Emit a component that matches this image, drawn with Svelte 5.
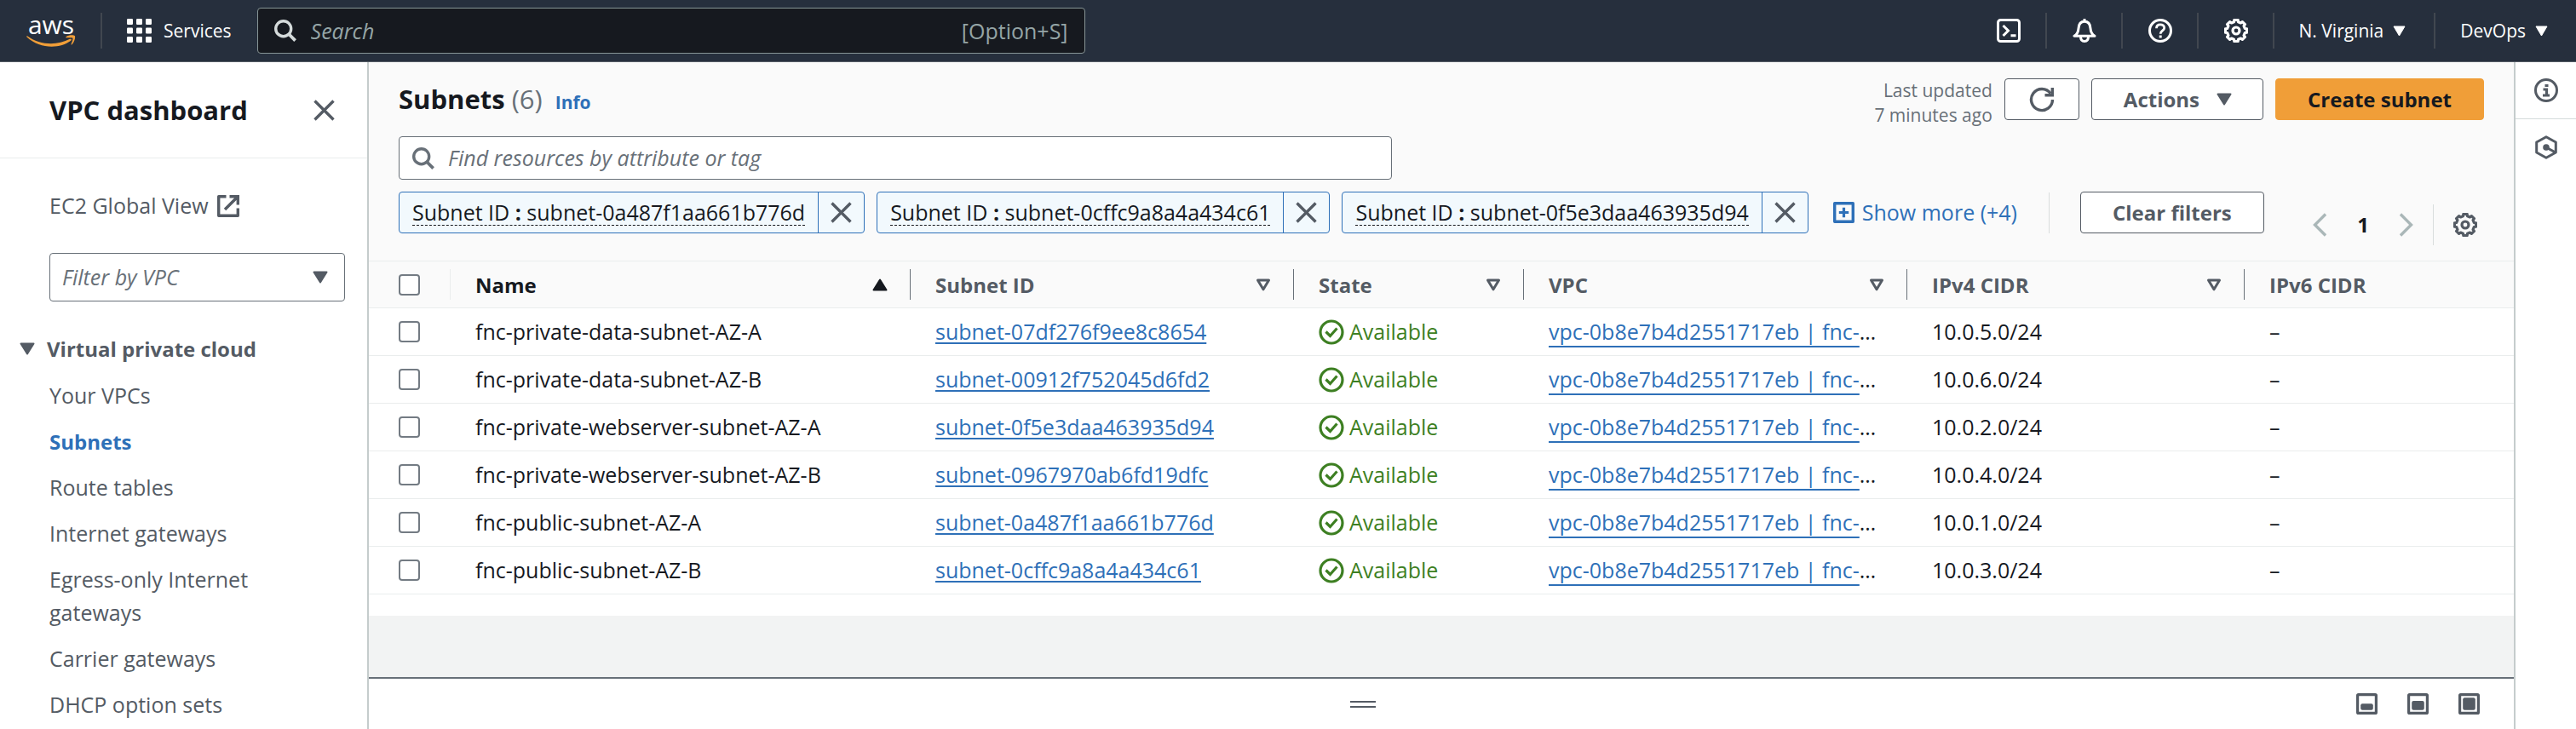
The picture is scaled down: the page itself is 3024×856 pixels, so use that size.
<script>
  const columns = [
    { label: 'Name', sorted: true },
    { label: 'Subnet ID' },
    { label: 'State' },
    { label: 'VPC' },
    { label: 'IPv4 CIDR' },
    { label: 'IPv6 CIDR', last: true },
  ];

  const rows = [
    { name: 'fnc-private-data-subnet-AZ-A', id: 'subnet-07df276f9ee8c8654', cidr: '10.0.5.0/24' },
    { name: 'fnc-private-data-subnet-AZ-B', id: 'subnet-00912f752045d6fd2', cidr: '10.0.6.0/24' },
    { name: 'fnc-private-webserver-subnet-AZ-A', id: 'subnet-0f5e3daa463935d94', cidr: '10.0.2.0/24' },
    { name: 'fnc-private-webserver-subnet-AZ-B', id: 'subnet-0967970ab6fd19dfc', cidr: '10.0.4.0/24' },
    { name: 'fnc-public-subnet-AZ-A', id: 'subnet-0a487f1aa661b776d', cidr: '10.0.1.0/24' },
    { name: 'fnc-public-subnet-AZ-B', id: 'subnet-0cffc9a8a4a434c61', cidr: '10.0.3.0/24' },
  ];

  const tokens = [
    'subnet-0a487f1aa661b776d',
    'subnet-0cffc9a8a4a434c61',
    'subnet-0f5e3daa463935d94',
  ];

  const links = [
    'Your VPCs',
    'Subnets',
    'Route tables',
    'Internet gateways',
    'Egress-only Internet gateways',
    'Carrier gateways',
    'DHCP option sets',
  ];

  // Outline of an eight-toothed cog centred in a 28-unit box.
  const cog = (() => {
    const points = [];
    for (let i = 0; i < 8; i++) {
      const mid = (i * Math.PI) / 4 - Math.PI / 2;
      for (const [offset, radius] of [[-0.24, 10.6], [-0.17, 12.8], [0.17, 12.8], [0.24, 10.6]]) {
        const x = 14 + radius * Math.cos(mid + offset);
        const y = 14 + radius * Math.sin(mid + offset);
        points.push(`${x.toFixed(2)},${y.toFixed(2)}`);
      }
    }
    return points.join(' ');
  })();
</script>

{#snippet gear()}
  <svg class="icon" width="28" height="28" viewBox="0 0 28 28" aria-hidden="true">
    <polygon points={cog} stroke-width="3.2" stroke-linejoin="round" />
    <circle cx="14" cy="14" r="4" stroke-width="3.2" />
  </svg>
{/snippet}

{#snippet magnifier()}
  <svg class="icon" width="26" height="26" viewBox="0 0 26 26" aria-hidden="true">
    <circle cx="10.7" cy="10.7" r="9" stroke-width="3.4" />
    <path d="M17 17l7.6 7.6" stroke-width="3.8" />
  </svg>
{/snippet}

{#snippet cross()}
  <svg class="icon" width="25" height="25" viewBox="0 0 25 25" aria-hidden="true">
    <path d="M1.500 1.500l22 22M23.500 1.500l-22 22" stroke-width="3.400" />
  </svg>
{/snippet}

{#snippet caret()}
  <svg class="solid" width="18" height="15" viewBox="0 0 18 15" aria-hidden="true">
    <path d="M1.500 1.500h15L9 13.500z" />
  </svg>
{/snippet}

{#snippet smallCaret()}
  <svg class="solid" width="15" height="13" viewBox="0 0 15 13" aria-hidden="true">
    <path d="M1 1h13L7.500 12z" stroke-width="1" />
  </svg>
{/snippet}

<div class="page">
  <header class="topbar">
    <a class="logo" href="#home">
      <span>aws</span>
      <svg width="58" height="15" viewBox="0 0 58 15" aria-hidden="true">
        <path d="M1 1.200C15 11.500 35 13.200 51 4.800c1.500-.7 2.500.9 1.200 1.900C39 16.600 16 16.600.5 2.500.2 1.500.4.900 1 1.200z" fill="#f09e38" />
        <path d="M46.500 2.200c3-2.400 9-2.400 10.300-1.200 1 1.400-.2 7.200-3.300 10.300-.8.500-1.200.2-.9-.6 1-2.500 2.400-6 1.700-7-.8-.9-4.500-.5-7.200-.4-.9 0-1.100-.6-.6-1.100z" fill="#f09e38" />
      </svg>
    </a>
    <span class="bar-rule"></span>
    <button class="services">
      <svg width="29" height="28" viewBox="0 0 29 28" fill="#fff" aria-hidden="true">
        {#each [0, 11, 22] as x}
          {#each [0, 10.5, 21] as y}
            <rect {x} {y} width="7" height="7" rx="1.200" />
          {/each}
        {/each}
      </svg>
      Services
    </button>
    <label class="global-search">
      {@render magnifier()}
      <input type="search" placeholder="Search" aria-label="Search" />
      <span>[Option+S]</span>
    </label>
    <nav class="utilities">
      <button class="utility" aria-label="CloudShell">
        <svg class="icon" width="28" height="28" viewBox="0 0 28 28" aria-hidden="true">
          <rect x="1.500" y="1.500" width="25" height="25" rx="3" stroke-width="3" />
          <path d="M7.500 8l6 6-6 6M16.500 19.700h6" stroke-width="3" />
        </svg>
      </button>
      <button class="utility" aria-label="Notifications">
        <svg class="icon" width="28" height="28" viewBox="0 0 28 28" aria-hidden="true">
          <path d="M14 0v3M2 20.300h24c-3.200-2-4.700-4.500-5-9C20.700 6 18 3.300 14 3.300S7.300 6 7 11.300c-.3 4.500-1.800 7-5 9z" stroke-width="3" stroke-linejoin="round" />
          <path d="M9.500 21c0 3.500 1.600 5.500 4.500 5.500s4.500-2 4.500-5.500" stroke-width="3" />
        </svg>
      </button>
      <button class="utility" aria-label="Support">
        <svg class="icon" width="28" height="28" viewBox="0 0 28 28" aria-hidden="true">
          <circle cx="14" cy="14" r="12.500" stroke-width="3" />
          <path d="M9.500 11.300C9.500 8.300 11.300 6.800 14 6.800s4.700 1.600 4.700 4c0 3.200-4.500 3-4.500 7" stroke-width="2.800" />
          <path d="M14.200 19.500v3" stroke-width="3" />
        </svg>
      </button>
      <button class="utility" aria-label="Settings">{@render gear()}</button>
      <button class="utility menu">N. Virginia {@render smallCaret()}</button>
      <button class="utility menu">DevOps {@render smallCaret()}</button>
    </nav>
  </header>

  <div class="body">
    <aside class="sidebar">
      <div class="side-head">
        <h2>VPC dashboard</h2>
        <button class="plain" aria-label="Close navigation">{@render cross()}</button>
      </div>
      <div class="side-body">
        <a class="global-view" href="#ec2">
          EC2 Global View
          <svg class="icon" width="26" height="26" viewBox="0 0 26 26" aria-hidden="true">
            <path d="M10.500 1.700H1.700v22.600h22.600V15.500" stroke-width="3.400" stroke-linejoin="round" />
            <path d="M14.500 1.700h9.800v9.800M24 2L9 17" stroke-width="3.400" />
          </svg>
        </a>
        <div class="select">
          <select aria-label="Filter by VPC">
            <option>Filter by VPC</option>
          </select>
          {@render caret()}
        </div>
        <button class="section">{@render caret()} Virtual private cloud</button>
        <ul>
          {#each links as link}
            <li><a href="#nav" class:active={link === 'Subnets'}>{link}</a></li>
          {/each}
        </ul>
      </div>
    </aside>

    <main>
      <section class="tools">
        <div class="title-row">
          <h1>Subnets <span>(6)</span></h1>
          <a class="info" href="#info">Info</a>
          <div class="actions">
            <p>Last updated<br />7 minutes ago</p>
            <button class="btn refresh" aria-label="Refresh">
              <svg class="icon" width="30" height="30" viewBox="0 0 30 30" aria-hidden="true">
                <path d="M27.500 15A12.500 12.500 0 1 1 25.200 7.800" stroke-width="3.400" />
                <path d="M18.500 9.800h8.800V1" stroke-width="3.400" />
              </svg>
            </button>
            <button class="btn drop">Actions {@render caret()}</button>
            <button class="btn primary">Create subnet</button>
          </div>
        </div>
        <div class="filter-row">
          <div class="filters">
            <label class="find">
              {@render magnifier()}
              <input type="search" placeholder="Find resources by attribute or tag" aria-label="Find resources" />
            </label>
            <div class="tokens">
              {#each tokens as token}
                <div class="token">
                  <button class="token-text"><span>Subnet ID <b>:</b> {token}</span></button>
                  <button class="token-close" aria-label="Remove filter">{@render cross()}</button>
                </div>
              {/each}
              <button class="more">
                <svg class="icon" width="25" height="25" viewBox="0 0 25 25" aria-hidden="true">
                  <rect x="1.700" y="1.700" width="21.600" height="21.600" stroke-width="3.400" stroke-linejoin="round" />
                  <path d="M12.500 6.800v11.400M6.800 12.500h11.400" stroke-width="3.200" />
                </svg>
                Show more (+4)
              </button>
              <span class="rule"></span>
              <button class="btn clear">Clear filters</button>
            </div>
          </div>
          <div class="pager">
            <button class="plain arrow" aria-label="Previous page">
              <svg class="icon" width="16" height="28" viewBox="0 0 16 28" aria-hidden="true"><path d="M15 1.500L2.500 14 15 26.500" stroke-width="3.400" /></svg>
            </button>
            <b>1</b>
            <button class="plain arrow" aria-label="Next page">
              <svg class="icon" width="16" height="28" viewBox="0 0 16 28" aria-hidden="true"><path d="M1 1.500L13.500 14 1 26.500" stroke-width="3.400" /></svg>
            </button>
            <span class="rule"></span>
            <button class="plain" aria-label="Preferences">{@render gear()}</button>
          </div>
        </div>
      </section>

      <table>
        <colgroup>
          <col class="c-check" /><col class="c-name" /><col class="c-id" /><col class="c-state" />
          <col class="c-vpc" /><col class="c-cidr" /><col />
        </colgroup>
        <thead>
          <tr>
            <th class="check"><div><input type="checkbox" aria-label="Select all" /></div></th>
            {#each columns as column}
              <th class:sorted={column.sorted} class:last={column.last}>
                <div>
                  {column.label}
                  {#if column.sorted}
                    <svg class="solid" width="18" height="15" viewBox="0 0 18 15" aria-hidden="true"><path d="M1.500 13.500h15L9 1.500z" /></svg>
                  {:else if !column.last}
                    <svg class="icon" width="18" height="15" viewBox="0 0 18 15" aria-hidden="true"><path d="M2.500 2h13L9 12.800z" stroke-width="3" stroke-linejoin="round" /></svg>
                  {/if}
                </div>
              </th>
            {/each}
          </tr>
        </thead>
        <tbody>
          {#each rows as row}
            <tr>
              <td class="check"><input type="checkbox" aria-label={row.name} /></td>
              <td>{row.name}</td>
              <td><a href="#subnet">{row.id}</a></td>
              <td>
                <span class="state">
                  <svg class="icon" width="30" height="30" viewBox="0 0 30 30" aria-hidden="true">
                    <circle cx="15" cy="15" r="13" stroke-width="3.200" />
                    <path d="M8.500 14.500l5 5 8-9" stroke-width="3.200" />
                  </svg>
                  Available
                </span>
              </td>
              <td><a class="vpc" href="#vpc">vpc-0b8e7b4d2551717eb | fnc-</a>…</td>
              <td>{row.cidr}</td>
              <td>–</td>
            </tr>
          {/each}
        </tbody>
      </table>

      <div class="empty"></div>

      <section class="split">
        <div class="grip"><button class="handle" aria-label="Resize panel"></button></div>
        <div class="sizes">
          {#each [12.3, 9, 5.3] as y}
            <button class="plain" aria-label="Panel size">
              <svg class="icon" width="25" height="25" viewBox="0 0 25 25" aria-hidden="true">
                <rect x="1.600" y="1.600" width="21.800" height="21.800" rx="1" stroke-width="3.200" />
                <rect x="5.200" {y} width="14.600" height={19.8 - y} rx="2" fill="currentColor" stroke="none" />
              </svg>
            </button>
          {/each}
        </div>
      </section>
    </main>

    <aside class="rail">
      <button aria-label="Info">
        <svg class="icon" width="28" height="28" viewBox="0 0 28 28" aria-hidden="true">
          <circle cx="14" cy="14" r="12.500" stroke-width="3" />
          <path d="M12.500 8.500h4M10.500 13h4v7M10 20h8" stroke-width="3.200" />
        </svg>
      </button>
      <button aria-label="Diagnostics">
        <svg class="icon" width="28" height="28" viewBox="0 0 28 28" aria-hidden="true">
          <path d="M14 1.800l11.300 6.200v12L14 26.200 2.700 20V8z" stroke-width="3" stroke-linejoin="round" />
          <circle cx="14" cy="14" r="3.800" fill="currentColor" stroke="none" />
          <path d="M14 14l10 5.500" stroke-width="3" />
        </svg>
      </button>
    </aside>
  </div>
</div>

<style>
  :global(body) { margin: 0; }

  .page {
    min-height: 100vh;
    display: flex;
    flex-direction: column;
    font-family: "Open Sans", "Noto Sans", sans-serif;
    font-size: 25px;
    line-height: 39px;
    color: #16191f;
    background: #fff;
  }
  .page * { box-sizing: border-box; }
  button, input, select {
    font: inherit;
    color: inherit;
    margin: 0;
    padding: 0;
    border: 0;
    background: none;
    outline: none;
  }
  button { white-space: nowrap; }
  h1, h2, p, ul { margin: 0; padding: 0; }
  a { color: inherit; text-decoration: none; }
  svg { display: block; flex: none; }
  .icon { fill: none; stroke: currentColor; }
  .solid { fill: currentColor; stroke: currentColor; stroke-width: 2; stroke-linejoin: round; }
  .plain { display: flex; }

  .topbar {
    display: flex;
    align-items: center;
    height: 73px;
    padding-left: 31px;
    background: #262f3d;
    border-bottom: 1px solid #545b64;
    color: #fff;
  }
  .logo { width: 58px; display: flex; flex-direction: column; align-items: center; }
  .logo span { font-size: 30px; font-weight: 500; line-height: 24px; }
  .bar-rule { width: 2px; height: 42px; margin: 0 29px; background: #414750; }
  .services {
    display: flex;
    align-items: center;
    gap: 14px;
    margin-right: 30px;
    font-size: 21px;
    font-weight: 500;
  }
  .global-search {
    display: flex;
    align-items: center;
    gap: 17px;
    flex: 0 1 972px;
    height: 54px;
    padding: 0 19px;
    border: 1px solid #879596;
    border-radius: 4px;
    background: #16191f;
    color: #d5dbdb;
  }
  input[type='search'] { flex: 1; min-width: 0; appearance: none; }
  .global-search input::placeholder { color: #95a5a6; font-style: italic; font-weight: 500; opacity: 1; }
  .global-search span { color: #95a5a6; }
  .utilities { display: flex; margin-left: auto; }
  .utility {
    display: flex;
    align-items: center;
    height: 42px;
    padding: 0 29px 0 30px;
    border-left: 2px solid #414750;
  }
  .utility:first-child { border-left: 0; }
  .menu { gap: 11px; padding: 0 33px 0 29px; font-size: 21px; font-weight: 500; }

  .body { flex: 1; display: flex; }

  .sidebar { width: 433px; flex: none; border-right: 2px solid #c5cccc; color: #545b64; }
  .side-head {
    display: flex;
    align-items: center;
    justify-content: space-between;
    height: 113px;
    padding: 0 38px 0 58px;
    border-bottom: 1px solid #eaeded;
  }
  h1, h2 { font-size: 31px; font-weight: 700; color: #16191f; }
  .side-body { padding: 36px 26px 0 58px; }
  .global-view { display: flex; align-items: center; gap: 10px; }
  .select {
    display: flex;
    align-items: center;
    height: 57px;
    margin: 36px 0;
    padding-right: 19px;
    border: 1px solid #687078;
    border-radius: 4px;
  }
  select { flex: 1; height: 100%; padding-left: 14px; appearance: none; font-style: italic; color: #687078; }
  .section {
    display: flex;
    align-items: center;
    gap: 14px;
    margin: 0 0 16px -35px;
    font-size: 24px;
    font-weight: 700;
  }
  ul { list-style: none; display: flex; flex-direction: column; gap: 15px; padding-right: 70px; }
  .active { font-size: 24px; font-weight: 700; color: #2e70b8; }
  li a { display: block; }

  main { flex: 1; min-width: 0; display: flex; flex-direction: column; }
  .tools { padding: 19px 35px 18px; background: #fafafa; border-bottom: 1px solid #eaeded; }
  .title-row { display: flex; align-items: flex-start; height: 58px; }
  h1 { line-height: 49px; }
  h1 span { font-weight: 400; color: #687078; }
  .info { margin-left: 15px; font-size: 21px; font-weight: 700; line-height: 57px; color: #2e70b8; }
  .actions { display: flex; align-items: flex-start; gap: 14px; margin-left: auto; }
  .actions p { font-size: 21px; line-height: 29px; text-align: right; color: #687078; }
  .btn {
    display: flex;
    align-items: center;
    justify-content: center;
    height: 49px;
    padding: 0 37px;
    border: 1px solid #545b64;
    border-radius: 4px;
    background: #fff;
    color: #545b64;
    font-size: 24px;
    font-weight: 700;
  }
  .refresh { width: 88px; padding: 0; }
  .drop { gap: 20px; padding: 0 36px 0 37px; }
  .primary { background: #f09e38; border-color: #f09e38; color: #16191f; }
  .filter-row { display: flex; align-items: flex-end; justify-content: space-between; margin-top: 10px; }
  .filters { margin-bottom: 14px; }
  .find {
    display: flex;
    align-items: center;
    gap: 16px;
    max-width: 1166px;
    height: 51px;
    padding: 0 15px;
    border: 1px solid #687078;
    border-radius: 4px;
    background: #fff;
    color: #687078;
  }
  .find input::placeholder { color: #687078; font-style: italic; font-weight: 500; opacity: 1; }
  .tokens { display: flex; align-items: center; gap: 14px; margin-top: 14px; }
  .token {
    display: flex;
    height: 49px;
    border: 1px solid #2e70b8;
    border-radius: 4px;
    background: #f2f9fd;
  }
  .token-text { padding: 0 15px; }
  .token-text span { display: inline-block; line-height: 30px; border-bottom: 1px dashed #16191f; }
  .token-close { display: flex; align-items: center; padding: 0 14px; border-left: 1px solid #2e70b8; color: #545b64; }
  .more { display: flex; align-items: center; gap: 9px; margin: 0 23px 0 15px; color: #2e70b8; }
  .rule { width: 1px; height: 48px; background: #d9dddd; }
  .clear { margin-left: 22px; }
  .pager { display: flex; align-items: center; height: 48px; padding-right: 8px; color: #545b64; }
  .pager b { margin: 0 36px; font-size: 24px; line-height: 48px; color: #16191f; }
  .arrow { color: #aab7b8; }
  .pager .rule { margin: 0 23px; }

  table { width: 100%; table-layout: fixed; border-collapse: separate; border-spacing: 0; }
  .c-check { width: 96px; }
  .c-name { width: 540px; }
  .c-id, .c-vpc { width: 450px; }
  .c-state { width: 270px; }
  .c-cidr { width: 396px; }
  th { height: 55px; padding: 0; background: #fafafa; border-bottom: 1px solid #eaeded; font-size: 24px; text-align: left; color: #545b64; }
  th div {
    display: flex;
    align-items: center;
    justify-content: space-between;
    height: 36px;
    padding: 0 26px 0 29px;
    border-right: 1px solid #687078;
  }
  th.sorted { color: #16191f; }
  th.last div { border-right: 0; }
  th.check div { padding-left: 35px; border-right-color: #eaeded; }
  td { height: 56px; padding: 0 0 0 29px; border-bottom: 1px solid #eaeded; font-weight: 500; white-space: nowrap; overflow: hidden; }
  td.check { padding-left: 35px; }
  td a { color: #2e70b8; text-decoration: underline; text-decoration-thickness: 2px; text-underline-offset: 3px; text-decoration-skip-ink: none; }
  td .vpc { text-underline-offset: 7px; }
  input[type='checkbox'] {
    display: block;
    width: 25px;
    height: 25px;
    appearance: none;
    border: 2px solid #737b83;
    border-radius: 4px;
    background: #fff;
  }
  .state { display: flex; align-items: center; gap: 6px; color: #3d7f22; }

  .empty { flex: 1; margin-top: 25px; background: #f2f3f3; }
  .split {
    display: flex;
    align-items: center;
    height: 61px;
    padding-right: 40px;
    border-top: 2px solid #687078;
  }
  .grip { flex: 1; display: flex; justify-content: center; }
  .handle { width: 30px; height: 8px; border-top: 2px solid #545b64; border-bottom: 2px solid #545b64; }
  .sizes { display: flex; gap: 35px; color: #545b64; }

  .rail { width: 73px; flex: none; border-left: 2px solid #c5cccc; color: #545b64; }
  .rail button { display: flex; align-items: center; justify-content: center; width: 100%; height: 66px; }
  .rail button:first-child { height: 67px; border-bottom: 1px solid #d5dbdb; }
</style>
